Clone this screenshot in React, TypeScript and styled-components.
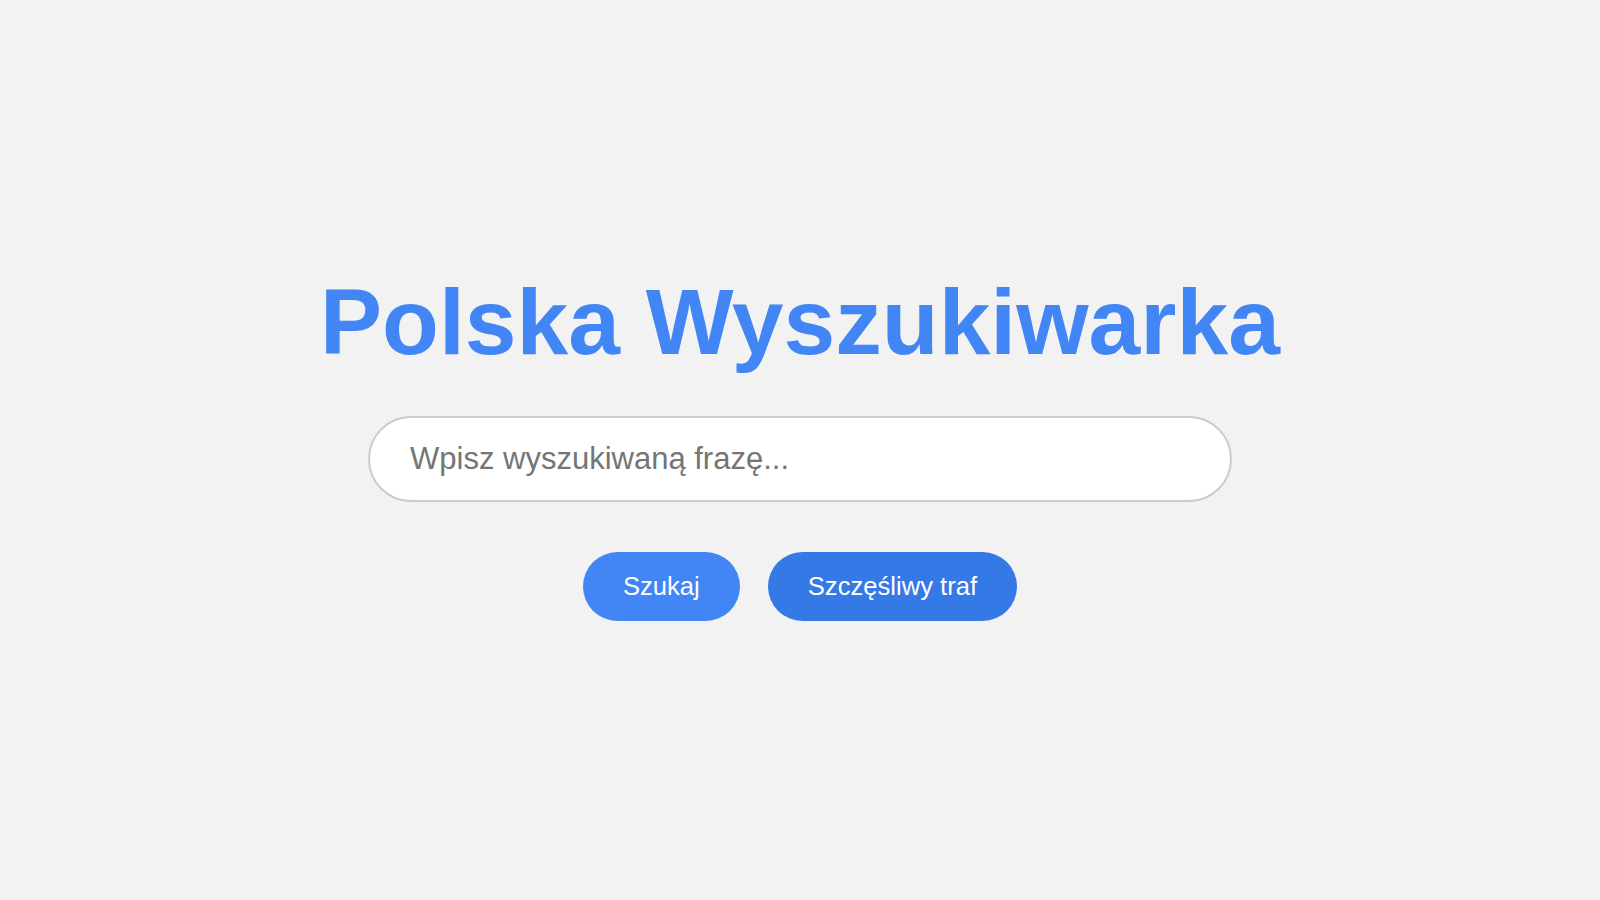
import React, { useState } from 'react'
import styled, { createGlobalStyle } from 'styled-components'

const GlobalStyle = createGlobalStyle`
  html, body {
    margin: 0;
    padding: 0;
    background: #f2f2f2;
    font-family: "Liberation Sans", Arial, sans-serif;
  }
`

const Page = styled.main`
  min-height: 100vh;
  box-sizing: border-box;
  padding-bottom: 10px;
  display: flex;
  flex-direction: column;
  align-items: center;
  justify-content: center;
`

const Title = styled.h1`
  margin: 0 0 40px;
  font-size: 93px;
  font-weight: 700;
  color: #4285f4;
`

const SearchInput = styled.input`
  box-sizing: border-box;
  width: 864px;
  padding: 23px 40px;
  font-family: inherit;
  font-size: 31px;
  color: #222;
  background: #fff;
  border: 2px solid #cccccc;
  border-radius: 50px;
  outline: none;

  &::placeholder {
    color: #757575;
  }
`

const Buttons = styled.div`
  margin-top: 50px;
  display: flex;
  gap: 28px;
`

const Button = styled.button<{ $dark?: boolean }>`
  padding: 20px 40px;
  font-family: inherit;
  font-size: 25.6px;
  color: #fff;
  background: ${p => (p.$dark ? '#3579e6' : '#4285f4')};
  border: none;
  border-radius: 40px;
  cursor: pointer;
`

function App(): JSX.Element {
  const [query, setquery] = useState<string>('')

  return (
    <>
      <GlobalStyle />
      <Page>
        <Title>Polska Wyszukiwarka</Title>
        <SearchInput
          value={query}
          onChange={e => setquery(e.currentTarget.value)}
          placeholder="Wpisz wyszukiwaną frazę..."
        />
        <Buttons>
          <Button>Szukaj</Button>
          <Button $dark>Szczęśliwy traf</Button>
        </Buttons>
      </Page>
    </>
  )
}

export default App
